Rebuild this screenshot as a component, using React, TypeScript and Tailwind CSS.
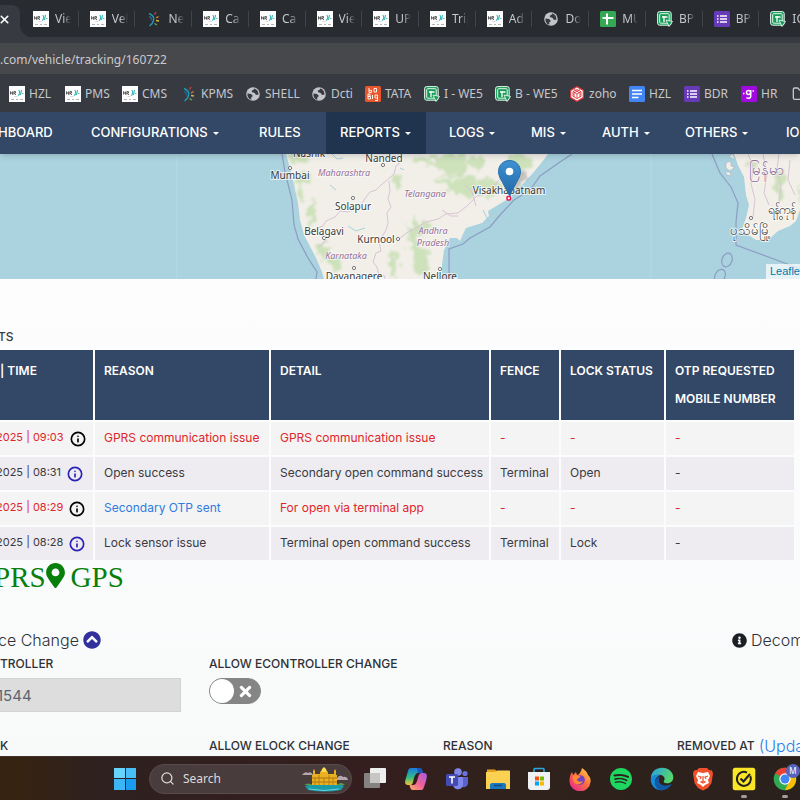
import React from "react";
import { FaChevronCircleUp, FaInfoCircle, FaMapMarkerAlt, FaTimes } from "react-icons/fa";
import { SiSpotify } from "react-icons/si";
import { Folder, Info, Search, X } from "lucide-react";

type Glyph = "nr" | "spark" | "globe" | "plus" | "sheet" | "forms" | "big" | "zoho" | "docs" | "g" | "folder";

function SiteIcon({ kind }: { kind: Glyph }) {
  const box = "block h-4 w-4 shrink-0";
  switch (kind) {
    case "nr":
      return (
        <svg viewBox="0 0 16 16" className={box} aria-hidden="true">
          <rect width="16" height="16" fill="#fdfdfd" />
          <path d="M1.500 8.500v-3L3.500 8.500v-3M4.800 8.500v-3h1.700v1.600H5l2 1.800" stroke="#555" strokeWidth=".9" fill="none" />
          <path d="M9 9.500c2-1 2.200-3.500.8-5.500M12.500 4l-1 5" stroke="#31b5bd" strokeWidth="1.100" fill="none" />
          <path d="M13 7.500h1.500" stroke="#6cc091" />
          <path d="M2 13.500h3M7 13.500h2M11 13.500h3" stroke="#b5b5b5" strokeWidth="1" />
          <path d="M5.500 10.500h3" stroke="#ccc" strokeWidth=".7" />
        </svg>
      );
    case "spark":
      return (
        <svg viewBox="0 0 16 16" className={box} fill="none" strokeWidth="1.400" aria-hidden="true">
          <path d="M3 2.500c4 1.500 5.500 3.500 4.500 7C7 12 5.500 13.500 3.500 15" stroke="#2298b5" />
          <path d="M3 5.500c2 .8 3 2 2.500 4" stroke="#285e8c" />
          <path d="M8.500 3.500 10 1" stroke="#c94040" />
          <path d="M10 7l2.500-1.500" stroke="#df8130" />
          <path d="M10 9.500l3 .5" stroke="#d5b53a" />
          <path d="M8.500 12.500 11 14" stroke="#6ca84c" />
        </svg>
      );
    case "globe":
      return (
        <svg viewBox="0 0 16 16" className={box} aria-hidden="true">
          <circle cx="8" cy="8" r="6.800" fill="#c3c5ca" />
          <path d="M2.500 7.500c3 0 4.500.8 5 2 .4 1.200-.5 1.500-1.200 1.500v2.800C3.500 13 2 10.500 2.500 7.500ZM9 2.500c0 2-2.200 1.500-2.200 2.700C6.800 7 10 6 10.300 8c.2 1 1.500 1 3 .8C14 6 12 3 9 2.500Z" fill="#383a40" />
        </svg>
      );
    case "plus":
      return (
        <svg viewBox="0 0 16 16" className={box} aria-hidden="true">
          <rect width="16" height="16" rx="1.500" fill="#34a853" />
          <path d="M7 2.500v11M2.500 7h11" stroke="#fff" strokeWidth="2" />
        </svg>
      );
    case "sheet":
      return (
        <svg viewBox="0 0 16 16" className={box} aria-hidden="true">
          <rect x=".6" y=".6" width="13.600" height="13.600" rx="2" fill="#159957" stroke="#e7f5ec" strokeWidth="1" />
          <rect x="2.700" y="2.700" width="9.500" height="9.500" rx="1" fill="none" stroke="#e7f5ec" strokeWidth="1" />
          <path d="M5 6h5.500M7 5v6" stroke="#fff" strokeWidth="1.300" fill="none" />
          <path d="m9 9 6.500 1.500-3.500 5Z" fill="#159957" stroke="#e7f5ec" strokeWidth=".9" />
        </svg>
      );
    case "forms":
      return (
        <svg viewBox="0 0 16 16" className={box} aria-hidden="true">
          <rect width="16" height="16" rx="1.500" fill="#673ab7" />
          <path d="M6 5h7M6 8h7M6 11h7" stroke="#fff" strokeWidth="1.500" />
          <path d="M3 5h1.500M3 8h1.500M3 11h1.500" stroke="#fff" strokeWidth="1.500" />
        </svg>
      );
    case "big":
      return (
        <svg viewBox="0 0 16 16" className={box} aria-hidden="true">
          <rect width="16" height="16" rx="1.500" fill="#e8562c" />
          <path d="M4 2v4.500h2.500V4.500H4M9 2.500v3.500h2.500V2.500ZM3 8v5h2.500v-2.500H3 5V8H3M7.500 9v4M10 9v3h2.500V9Zm2.500 3v2.500H10" stroke="#fff" strokeWidth=".9" fill="none" />
        </svg>
      );
    case "zoho":
      return (
        <svg viewBox="0 0 16 16" className={box} fill="none" aria-hidden="true">
          <path d="m8 .8 6.300 3.600v7.200L8 15.200l-6.300-3.600V4.400Z" fill="#fff" stroke="#e0393e" strokeWidth="1.200" />
          <path d="m8 3.500 4 2.200v4.600l-4 2.200-4-2.200V5.700ZM4 5.700l4 2.300 4-2.300M8 8v4.500M5 3.500l6 3.500v4M11 3.500 5 7v4" stroke="#e0393e" strokeWidth=".9" />
        </svg>
      );
    case "docs":
      return (
        <svg viewBox="0 0 16 16" className={box} aria-hidden="true">
          <rect width="16" height="16" rx="1.500" fill="#4285f4" />
          <path d="M3 4.500h10M3 8h10M3 11.500h6.500" stroke="#fff" strokeWidth="1.500" />
        </svg>
      );
    case "g":
      return (
        <svg viewBox="0 0 16 16" className={box} aria-hidden="true">
          <rect width="16" height="16" rx="1" fill="#a208e0" />
          <circle cx="7.500" cy="6.500" r="2" fill="none" stroke="#fff" strokeWidth="1.500" />
          <path d="M9.700 4v6.500c0 2-3 2.200-4.200 1" fill="none" stroke="#fff" strokeWidth="1.500" />
          <path d="M2 7.500h1.500M11.500 5h1.500" stroke="#fff" strokeWidth="1.500" />
        </svg>
      );
    default:
      return <Folder className="h-4 w-4 shrink-0" strokeWidth={2} aria-hidden="true" />;
  }
}

const tabs: [string, Glyph][] = [
  ["Vie", "nr"], ["Veh", "nr"], ["Ne", "spark"], ["Ca", "nr"], ["Ca", "nr"], ["Vie", "nr"], ["UP", "nr"],
  ["Trip", "nr"], ["Ad", "nr"], ["Do", "globe"], ["MU", "plus"], ["BP", "sheet"], ["BP", "forms"], ["IO", "sheet"],
];

const bookmarks: [string, Glyph, string][] = [
  ["HZL", "nr", "w-14"],
  ["PMS", "nr", "w-[57px]"],
  ["CMS", "nr", "w-[59px]"],
  ["KPMS", "spark", "w-16"],
  ["SHELL", "globe", "w-[66px]"],
  ["Dcti", "globe", "w-[54px]"],
  ["TATA", "big", "w-[59px]"],
  ["I - WE5", "sheet", "w-[71px]"],
  ["B - WE5", "sheet", "w-[74px]"],
  ["zoho", "zoho", "w-[60px]"],
  ["HZL", "docs", "w-[55px]"],
  ["BDR", "forms", "w-[57px]"],
  ["HR", "g", "w-[51px]"],
  ["", "folder", "w-8"],
];

const navItems: { label: string; width: string; caret?: boolean; active?: boolean }[] = [
  { label: "HBOARD", width: "w-[93px] pl-3.5" },
  { label: "CONFIGURATIONS", width: "w-[168px] pl-3.5", caret: true },
  { label: "RULES", width: "w-[81px] pl-3.5" },
  { label: "REPORTS", width: "w-[100px] pl-3.5", caret: true, active: true },
  { label: "LOGS", width: "w-[91px] pl-[23px]", caret: true },
  { label: "MIS", width: "w-[71px] pl-3.5", caret: true },
  { label: "AUTH", width: "w-[83px] pl-3.5", caret: true },
  { label: "OTHERS", width: "w-[101px] pl-3.5", caret: true },
  { label: "IO", width: "w-[60px] pl-3.5" },
];

function BrowserChrome() {
  return (
    <header className="shrink-0 bg-[#383a42] font-['Noto_Sans',sans-serif] text-[#c5c7cb]">
      <div className="flex h-[37px] overflow-hidden bg-[#383a42]">
        <div className="w-5 shrink-0 bg-[#282b30]">
          <div className="mt-[5px] flex h-8 items-center rounded-tr-lg bg-[#383a42]">
            <button type="button" aria-label="Close tab" className="-ml-0.5 pb-1 text-white">
              <X size={13} strokeWidth={3} />
            </button>
          </div>
        </div>
        <div className="-mr-4 flex min-w-0 flex-1 rounded-bl-xl bg-[#282b30] pl-0.5">
          {tabs.map(([title, icon], i) => (
            <button key={i} type="button" className="flex h-[37px] min-w-0 flex-1 items-center pl-[11px]">
              <SiteIcon kind={icon} />
              <span className="ml-1.5 w-4 overflow-hidden text-left text-xs whitespace-nowrap [mask-image:linear-gradient(to_right,black_50%,transparent)]">
                {title}
              </span>
              <span className="ml-auto h-4 w-px bg-[#414449]" />
            </button>
          ))}
        </div>
      </div>
      <div className="py-1.5">
        <input
          type="text"
          aria-label="Address"
          defaultValue=".com/vehicle/tracking/160722"
          className="block h-[31px] w-full bg-[#47484c] pt-px text-xs text-[#c9cace] outline-none"
        />
      </div>
      <nav aria-label="Bookmarks" className="flex h-8 overflow-hidden pb-1 pl-[9px] text-xs">
        {bookmarks.map(([name, icon, width], i) => (
          <a key={i} href="#" aria-label={name || "Folder"} className={`flex shrink-0 items-center gap-1 whitespace-nowrap ${width}`}>
            <SiteIcon kind={icon} />
            {name}
          </a>
        ))}
      </nav>
    </header>
  );
}

function SiteNav() {
  return (
    <nav aria-label="Main" className="relative z-10 flex h-[42px] shrink-0 overflow-hidden bg-[#334766] text-[13px] font-medium text-white shadow-md">
      <div className="-ml-4 flex">
        {navItems.map((n) => (
          <a
            key={n.label}
            href="#"
            className={`flex shrink-0 items-center gap-[5px] whitespace-nowrap ${n.width} ${n.active ? "bg-[#20344f]" : ""}`}
          >
            {n.label}
            {n.caret && <span className="border-x-[3px] border-t-[3px] border-x-transparent border-t-white" />}
          </a>
        ))}
      </div>
    </nav>
  );
}

const india =
  "M286 154 L290 168 294 185 298 203 300 220 304 235 312 250 317 260 322 272 324 279 H441 L442 265 444 250 450 238 457 238 460 241 463 234 466 228 482 223 489 216 488 211 498 205 508 199 520 187 533 173 542 162 548 154Z";
const burma =
  "M734 154 L738 165 744 177 746 195 749 205 746 218 741 232 750 236 756 240 768 240 778 231 790 226 796 221 800 210 V154Z";

const greens: [number, number, number, number][] = [
  [302, 179, 10, 7], [298, 158, 10, 5], [311, 215, 4, 16], [323, 251, 6, 10], [335, 263, 8, 5], [299, 193, 4, 6],
  [452, 164, 16, 12], [425, 161, 12, 4], [465, 187, 17, 10], [490, 187, 12, 9], [520, 162, 13, 8], [447, 181, 8, 5],
  [414, 241, 5, 26], [420, 228, 10, 6], [421, 260, 7, 14], [397, 182, 3, 9], [393, 265, 5, 13], [780, 184, 5, 15],
  [753, 165, 4, 6], [477, 162, 9, 7], [799, 196, 2, 9],
];

const places: [string, number, number][] = [
  ["Nashik", 309, 157], ["Nanded", 384, 162], ["Mumbai", 290, 179], ["Solapur", 353, 210], ["Belagavi", 324, 235],
  ["Kurnool", 376, 243], ["Davanagere", 354, 280], ["Nellore", 440, 280], ["Visakhapatnam", 509, 194],
];
const regions: [string, number, number][] = [
  ["Maharashtra", 344, 176], ["Telangana", 425, 197], ["Andhra", 433, 234], ["Pradesh", 433, 246], ["Karnataka", 346, 259],
];

function TrackingMap() {
  return (
    <section aria-label="Vehicle map" className="relative h-[125px] shrink-0 overflow-hidden bg-[#aad3df]">
      <svg viewBox="0 154 800 125" preserveAspectRatio="xMinYMin slice" className="block h-full w-full font-['Noto_Sans',sans-serif]">
        <defs>
          <filter id="soft" x="-20%" y="-20%" width="140%" height="140%">
            <feTurbulence type="fractalNoise" baseFrequency=".12" numOctaves="3" seed="4" />
            <feDisplacementMap in="SourceGraphic" scale="18" xChannelSelector="R" yChannelSelector="G" />
            <feGaussianBlur stdDeviation=".9" />
          </filter>
          <linearGradient id="pin" x1="0" y1="0" x2="0" y2="1">
            <stop stopColor="#3e91d2" />
            <stop offset="1" stopColor="#2468a5" />
          </linearGradient>
          <clipPath id="land">
            <path d={india} />
            <path d={burma} />
          </clipPath>
        </defs>
        <path d="M177 154v125M651 154v125" stroke="#b5d8e2" />
        <path d={india} fill="#f2efe9" />
        <path d={burma} fill="#f2efe9" />
        <g clipPath="url(#land)">
          <g filter="url(#soft)" fill="#c9e0b6" opacity=".9">
            {greens.map(([x, y, rx, ry], i) => (
              <ellipse key={i} cx={x} cy={y} rx={rx} ry={ry} />
            ))}
          </g>
        </g>
        <g fill="none" stroke="#d8c4d6" strokeWidth="1">
          <path d="M400 163l-4 3-2 8-8 7-5 4-5 5-6 2-4 5-3 5-8 7-7 3-8-1-5 6-9 4-3 5-6 2 1 6 8 2-2 7-6 4" />
          <path d="M389 181l1 10-2 8 3 8-4 6 1 10-2 7-7 12 2 9-5 2-3 9 4 5 2 8 6 1-1 4" />
          <path d="M400 238l8-6 10-5 8-5 12-3 8-5 12-1 9-7 10-10 12-4 8-10 5-5M442 210l9 6 7 0M465 185l7 7 4 14" />
          <path d="M748 154l5 12-2 18 4 15-2 18M763 154l4 20-3 19 5 12M779 154l-2 15 4 18-3 24M790 160l-2 20 7 15" />
        </g>
        <g fill="none" stroke="#8d9dc2" strokeWidth="1.200">
          <path d="M282 154l3 18 7 28 2 25 4 14 10 19 9 14-1 7" />
          <path d="M449 279v-30l14-5 7-6 20-11 10-12 14-15 16-10 10-14 20-14 12-8" />
          <path d="M712 154l8 19 11 14 7 16-2 19v23l54 20 12 4" />
          <ellipse cx="727" cy="260" rx="5" ry="7" transform="rotate(20 727 260)" />
          <ellipse cx="720" cy="276" rx="5" ry="7" transform="rotate(25 720 276)" />
        </g>
        <path d="M726 163q6-4 5 3l4 1-5 4-4-3zM725 172l5 0 1 4-4-1zM729 156l4-2 2 5" fill="#f2efe9" stroke="#9ba9b9" strokeWidth=".5" />
        <g fill="none" stroke="#96c6d6" strokeWidth=".8">
          <path d="M331 153l6 6 6-1M330 185l6 5M348 226l8 5 9-3M400 168l4 2M489 222l-6-12" />
        </g>
        <g fill="#fff" stroke="#777" strokeWidth="1">
          {[[383, 165], [290, 168], [353, 198], [324, 238], [398, 239], [354, 268], [440, 269], [751, 218], [781, 218]].map(([x, y]) => (
            <circle key={`${x}-${y}`} cx={x} cy={y} r="1.600" />
          ))}
        </g>
        <g textAnchor="middle" fontSize="10" fill="#3a3a3a" stroke="#fff" strokeOpacity=".7" strokeWidth="2" paintOrder="stroke">
          {places.map(([t, x, y]) => <text key={t} x={x} y={y}>{t}</text>)}
          <text x="781" y="214" fontSize="12">ရန်ကုန်</text>
          <text x="750" y="235" fontSize="13">ပုသိမ်မြို့</text>
        </g>
        <g textAnchor="middle" fontSize="9" fontStyle="italic" fill="#947099" stroke="#fff" strokeOpacity=".6" strokeWidth="1.500" paintOrder="stroke">
          {regions.map(([t, x, y]) => <text key={t} x={x} y={y}>{t}</text>)}
          <text x="766" y="175" fontSize="15" fontStyle="normal">မြန်မာ</text>
        </g>
        <path d="M510 198l14-18q5-6 0-9l-8 2z" fill="#333" opacity=".25" filter="url(#soft)" />
        <rect x="507" y="196.500" width="3.500" height="3.500" rx="1" fill="#fff" stroke="#e5184f" strokeWidth="1.500" />
        <path d="M509.500 160.500c-6.500 0-11 5-11 11 0 4 1.800 7 4 11l7 13 7-13c2.200-4 4-7 4-11 0-6-4.500-11-11-11Z" fill="url(#pin)" stroke="#2a6fab" />
        <circle cx="509.500" cy="171.500" r="3.800" fill="#fff" />
      </svg>
      <a href="#" className="absolute right-0 bottom-0 h-[15px] w-[34px] overflow-hidden bg-white/70 pl-1 font-['Liberation_Sans',sans-serif] text-[11px] leading-[14px] whitespace-nowrap text-[#0078a8]">
        Leaflet
      </a>
    </section>
  );
}

type Tone = "red" | "dark" | "blue";
const tones: Record<Tone, string> = { red: "text-[#e0262b]", dark: "text-[#3a3a40]", blue: "text-[#2f7be0]" };

const events: { time: string; tone: Tone; reason: string; reasonTone: Tone; detail: string; fence: string; lock: string }[] = [
  { time: "2025 | 09:03", tone: "red", reason: "GPRS communication issue", reasonTone: "red", detail: "GPRS communication issue", fence: "-", lock: "-" },
  { time: "2025 | 08:31", tone: "dark", reason: "Open success", reasonTone: "dark", detail: "Secondary open command success", fence: "Terminal", lock: "Open" },
  { time: "2025 | 08:29", tone: "red", reason: "Secondary OTP sent", reasonTone: "blue", detail: "For open via terminal app", fence: "-", lock: "-" },
  { time: "2025 | 08:28", tone: "dark", reason: "Lock sensor issue", reasonTone: "dark", detail: "Terminal open command success", fence: "Terminal", lock: "Lock" },
];

function EventsTable() {
  return (
    <table className="-ml-1.5 w-[802px] table-fixed border-separate border-spacing-[2px] text-left text-xs whitespace-nowrap">
      <colgroup>
        <col className="w-[97px]" />
        <col className="w-[174px]" />
        <col className="w-[218px]" />
        <col className="w-[68px]" />
        <col className="w-[103px]" />
        <col className="w-[128px]" />
      </colgroup>
      <thead>
        <tr className="bg-[#334766] align-top leading-7 text-white">
          {["| TIME", "REASON", "DETAIL", "FENCE", "LOCK STATUS"].map((h, i) => (
            <th key={h} scope="col" className={`py-[7px] font-semibold ${i === 0 ? "pl-1" : "pl-[9px]"}`}>
              {h}
            </th>
          ))}
          <th scope="col" className="py-[7px] pl-[9px] font-semibold">
            OTP REQUESTED
            <br />
            MOBILE NUMBER
          </th>
        </tr>
      </thead>
      <tbody>
        {events.map((e) => (
          <tr key={e.time} className={`h-[33px] odd:bg-[#f4f4f4] even:bg-[#eeecf1] ${tones[e.tone]}`}>
            <td className="p-0">
              <div className="flex items-center gap-0.5">
                <span className="pb-0.5 text-[11px]">{e.time}</span>
                <button type="button" aria-label="Event details" className={e.tone === "red" ? "ml-1 text-black" : "ml-1 text-[#2b22b8]"}>
                  <Info size={16} strokeWidth={2.500} />
                </button>
              </div>
            </td>
            <td className={`p-0 pb-0.5 pl-[9px] ${tones[e.reasonTone]}`}>{e.reason}</td>
            <td className="p-0 pb-0.5 pl-[9px]">{e.detail}</td>
            <td className="p-0 pb-0.5 pl-[9px]">{e.fence}</td>
            <td className="p-0 pb-0.5 pl-[9px]">{e.lock}</td>
            <td className="p-0 pb-0.5 pl-[9px]">-</td>
          </tr>
        ))}
      </tbody>
    </table>
  );
}

function DevicePanel() {
  return (
    <section aria-label="Device change" className="text-xs font-medium text-[#2e3136]">
      <div className="flex h-6 items-center text-base font-light whitespace-nowrap">
        <h2 className="-ml-0.5">ce Change</h2>
        <button type="button" aria-label="Collapse" className="ml-1 text-[#32309c]">
          <FaChevronCircleUp size={18} />
        </button>
        <div className="ml-auto flex w-[68px] items-center gap-1">
          <FaInfoCircle size={15} className="shrink-0 text-[#1b1e22]" />
          <span>Decom</span>
        </div>
      </div>
      <div className="grid h-[82px] grid-cols-[209px_234px_234px_1fr] whitespace-nowrap">
        <div>
          <label htmlFor="controller" className="block h-[26px] leading-6">TROLLER</label>
          <input
            id="controller"
            readOnly
            defaultValue="1544"
            className="-ml-1 block h-[34px] w-[185px] border border-[#d0d2d4] bg-[#ddd] text-[15px] font-normal text-[#5b6470] outline-none"
          />
        </div>
        <div>
          <label htmlFor="allow" className="block h-[26px] leading-6">ALLOW ECONTROLLER CHANGE</label>
          <label className="flex h-[26px] w-[52px] cursor-pointer items-center justify-between rounded-full border border-[#858585] bg-[#858585] pr-1.5">
            <input id="allow" type="checkbox" className="sr-only" />
            <span className="h-6 w-6 rounded-full bg-white" />
            <FaTimes size={17} className="text-white" />
          </label>
        </div>
      </div>
      <div className="grid grid-cols-[209px_234px_234px_1fr] leading-6 whitespace-nowrap">
        <span>K</span>
        <span>ALLOW ELOCK CHANGE</span>
        <span>REASON</span>
        <span className="flex gap-1">
          REMOVED AT
          <a href="#" className="text-base leading-6 font-light text-[#2b7de9]">(Upda</a>
        </span>
      </div>
    </section>
  );
}

function AppIcon({ name }: { name: string }) {
  const s = "block h-6 w-6";
  switch (name) {
    case "Task view":
      return (
        <svg viewBox="0 0 24 24" className={s}>
          <rect x="7" y="1" width="16" height="15" rx="1" fill="#eee" />
          <rect x="1" y="6" width="16" height="15" rx="1" fill="#858381" />
          <path d="M7 6h10v10H7z" fill="#c7c6c5" />
        </svg>
      );
    case "Copilot":
      return (
        <svg viewBox="0 0 24 24" className={s}>
          <defs>
            <linearGradient id="cpa" x1="0" y1="0" x2="0" y2="1"><stop stopColor="#1b7be0" /><stop offset=".55" stopColor="#30bb86" /><stop offset="1" stopColor="#f3c634" /></linearGradient>
            <linearGradient id="cpb" x1="1" y1="0" x2="0" y2="1"><stop stopColor="#a45ae8" /><stop offset=".5" stopColor="#ee5f9c" /><stop offset="1" stopColor="#ffae65" /></linearGradient>
          </defs>
          <path d="M7 1h8c3 0 3 2 4 5h-5c-2 0-3 2-4 5l-1 4c-.6 2-1 3-3 3H4c-4 0-3-4-2-7l2-7c.7-2 1-3 3-3Z" fill="url(#cpa)" />
          <path d="M17 23H9c-2 0-3-2-3.500-5H9c2 0 3-1 4-4l1.500-5c.6-2 1.500-3 3.500-3h2c4 0 3 4 2 8l-2 6c-.7 2-1 3-3 3Z" fill="url(#cpb)" />
          <path d="M13 1h2c3 0 3 2 4 5h-5Z" fill="#1d55bc" />
        </svg>
      );
    case "Teams":
      return (
        <svg viewBox="0 0 24 24" className={s}>
          <circle cx="13" cy="5" r="3.800" fill="#8188ec" />
          <circle cx="20" cy="6.500" r="2.600" fill="#6a72dc" />
          <path d="M17 10h6v6c0 3-3 5-6 4Z" fill="#5961cd" />
          <path d="M8 10h10v7c0 7-10 7-10 0Z" fill="#8188ec" />
          <rect x="1" y="7" width="12" height="12" rx="1.500" fill="#444bb5" />
          <path d="M4 10h6M7 10v6.500" stroke="#fff" strokeWidth="1.600" />
        </svg>
      );
    case "Files":
      return (
        <svg viewBox="0 0 24 24" className={s}>
          <path d="M1 2.500h8l3 3H1Z" fill="#e5a21c" />
          <path d="M0 5h9l2-1.500h12c.6 0 1 .4 1 1V22H0Z" fill="#fbd152" />
          <path d="M4 22v-4c0-1 .7-2 2-2h12c1.300 0 2 1 2 2v4Z" fill="#1878c0" />
          <path d="M8 18.500h8" stroke="#0a4b83" strokeWidth="1.500" />
        </svg>
      );
    case "Store":
      return (
        <svg viewBox="0 0 24 24" className={s}>
          <path d="M7 6V2.500Q7 1.500 8 1.500h8q1 0 1 1V6" fill="none" stroke="#2ba7de" strokeWidth="1.600" />
          <path d="M1 5h22v15q0 3-3 3H4q-3 0-3-3Z" fill="#f0f1f2" />
          <path d="M8 9.500h4v4H8z" fill="#f25022" /><path d="M13 9.500h4v4h-4z" fill="#7fba00" />
          <path d="M8 14.500h4v4H8z" fill="#00a4ef" /><path d="M13 14.500h4v4h-4z" fill="#ffb900" />
        </svg>
      );
    case "Firefox":
      return (
        <svg viewBox="0 0 24 24" className={s}>
          <defs><linearGradient id="ff" x1="1" y1="0" x2=".2" y2="1"><stop stopColor="#ffe14a" /><stop offset=".5" stopColor="#ff7139" /><stop offset="1" stopColor="#e6298f" /></linearGradient></defs>
          <path d="M14 1c4 3 5 4 6 7 2 2 3 4 2.500 7A10.500 9.800 0 0 1 1.500 14c0-4 1-7 2.500-9l1 3 3-3 1 3c2 0 4-3 5-7Z" fill="url(#ff)" />
          <circle cx="12" cy="13" r="4.800" fill="#7141c6" />
          <path d="M5 9c3-2 5 0 7 0 1 2-3 2-3 4 1 2 4 2 6 1-2 5-9 4-10-1Z" fill="#ff8a30" />
        </svg>
      );
    case "Spotify":
      return (
        <span className="block h-6 w-6 p-px">
          <SiSpotify size={22} color="#1ed760" />
        </span>
      );
    case "Edge":
      return (
        <svg viewBox="0 0 24 24" className={s}>
          <defs>
            <linearGradient id="eg" x1="0" y1="0" x2="1" y2=".4"><stop stopColor="#299ee5" /><stop offset="1" stopColor="#54d66d" /></linearGradient>
          </defs>
          <path d="M.8 11C1.500 4 6 .7 12 .7c7 0 11.300 5 11.300 9.500 0 4-3 6-6.300 6-2 0-4-.8-3-2.500 2-3-1-6-5-6-4 0-7 2-8.200 3.300Z" fill="url(#eg)" />
          <path d="M.8 11c2-3 6-4 9-2.800-4 2-5.500 5-4.500 9 1 3.500 4 5.500 7 6C5 23.800 0 18 .8 11Z" fill="#168bd8" />
          <path d="M9.800 9.500c-2.300 4-.2 9 5.200 9 3 0 5-1 6.700-1.500-3 5.500-9 7.500-13 5.500-6-3.500-4.500-11 1.100-13Z" fill="#1158a5" />
        </svg>
      );
    case "Brave":
      return (
        <svg viewBox="0 0 24 24" className={s}>
          <path d="m8 1-2 2-3 .5-1 3L3.500 16 7 21l5 2.500 5-2.500 3.500-5L22 6.500l-1-3-3-.5-2-2Z" fill="#f1502b" />
          <path d="m7 5 5 1 5-1 2 4-2 4 1 3-4 2-2 2-2-2-4-2 1-3-2-4Z" fill="#fff" />
          <path d="m7 9 3 1-1 2M17 9l-3 1 1 2M12 9v5l-2 1 2 1 2-1-2-1" stroke="#f1502b" strokeWidth="1.200" fill="none" />
        </svg>
      );
    case "Norton":
      return (
        <svg viewBox="0 0 24 24" className={s} fill="none">
          <rect x=".7" y=".7" width="22.600" height="22.600" rx="2.500" fill="#fbe527" />
          <path d="M18.300 9a7 7 0 1 1-3.300-3.400" stroke="#222" strokeWidth="2" />
          <path d="m8.500 11.500 3 3L18 7" stroke="#222" strokeWidth="2.200" />
        </svg>
      );
    default:
      return (
        <svg viewBox="0 0 24 24" className="block h-6 w-6 overflow-visible">
          <circle cx="12" cy="12" r="11.300" fill="#31a852" />
          <path d="M12 12 2.300 6.200A11.300 11.300 0 0 1 22 7H12Z" fill="#e94235" />
          <path d="M12 12h5L12 23.300A11.300 11.300 0 0 0 22 7H12Z" fill="#fbbc05" />
          <circle cx="12" cy="12" r="5.700" fill="#fff" />
          <circle cx="12" cy="12" r="4.500" fill="#4285f4" />
          <circle cx="20" cy="4" r="7" fill="#5864bb" />
          <text x="20" y="7" textAnchor="middle" fontSize="8" fill="#fff">M</text>
        </svg>
      );
  }
}

function Temple() {
  return (
    <svg viewBox="0 0 48 26" className="ml-auto h-[26px] w-12 shrink-0" aria-hidden="true">
      <path d="M1 9q3-4 6-2 3-2 5 2ZM36 12q3-4 6-1 4-1 5 3H36Z" fill="#b6a7ad" />
      <path d="M4 20q8-3 20-2 13-1 19 2l-3 4q-16 3-33 0Z" fill="#1a9ba8" />
      <path d="M8 23q15 3 30 0" stroke="#67d5e3" fill="none" />
      <path d="M3 19q5-3 8 0ZM36 19q4-4 8 0Z" fill="#599d46" />
      <path d="M11 19V9h1V5l1-2 1 2v3h5V6l4-3 4 3v2h6V5l1-2 1 2v4h1v10Z" fill="#e9b11f" />
      <path d="M11 12h25M11 16h25" stroke="#9b6412" strokeWidth=".8" />
      <path d="M14 12v7M18 9v10M23 12v7M28 9v10M32 12v7" stroke="#b57918" strokeWidth=".9" />
      <path d="M20 6q0-3 3-5 3 2 3 5Z" fill="#ffdc4b" />
    </svg>
  );
}

const apps = ["Task view", "Copilot", "Teams", "Files", "Store", "Firefox", "Spotify", "Edge", "Brave", "Norton", "Chrome"];

function Taskbar() {
  return (
    <footer className="flex h-11 shrink-0 items-center overflow-hidden border-t border-[#3f302a] bg-[linear-gradient(90deg,#37230f_0,#2e211f_12%,#351e1e_46%,#30211c_60%,#2b211c)] pl-[114px] font-['Noto_Sans',sans-serif]">
      <button type="button" aria-label="Start" className="grid h-[22px] w-[22px] shrink-0 grid-cols-2 gap-px">
        <span className="bg-[#66d3fb]" />
        <span className="bg-[#47bff6]" />
        <span className="bg-[#3bb5f3]" />
        <span className="bg-[#199cef]" />
      </button>
      <label className="ml-[13px] flex h-[30px] w-[203px] shrink-0 items-center rounded-full border border-[#5a4b4b] bg-[#493c3c] pr-0.5 pl-2.5 text-[#dedada]">
        <Search size={15} strokeWidth={2} className="shrink-0" />
        <input type="text" placeholder="Search" aria-label="Search" className="ml-2 w-20 bg-transparent text-xs outline-none placeholder:text-[#dedada]" />
        <Temple />
      </label>
      <div className="ml-[11px] flex gap-[17px]">
        {apps.map((a, i) => (
          <button key={a} type="button" aria-label={a} className="relative shrink-0">
            <AppIcon name={a} />
            {i > 8 && <span className="absolute -bottom-[7px] left-[9px] h-[3px] w-1.5 rounded-full bg-[#a39e9b]" />}
          </button>
        ))}
      </div>
    </footer>
  );
}

export default function App() {
  return (
    <div className="flex h-screen flex-col overflow-hidden bg-[#fcfdfd] font-['Inter',sans-serif]">
      <BrowserChrome />
      <SiteNav />
      <TrackingMap />
      <main className="min-h-0 flex-1 overflow-hidden bg-linear-to-b from-[#fdfdfe] to-[#f8fafa] pt-[46px]">
        <h2 className="-ml-0.5 h-[23px] text-xs leading-6 font-medium text-[#3a3d42]">TS</h2>
        <EventsTable />
        <div className="flex h-[66px] items-start font-['Liberation_Serif',serif] text-[29px] leading-[30px] text-[#087f0b]">
          <span className="-ml-1.5">PRS</span>
          <FaMapMarkerAlt size={25} className="mt-px -ml-[3px]" />
          <span className="ml-[3px]">GPS</span>
        </div>
        <DevicePanel />
      </main>
      <Taskbar />
    </div>
  );
}
